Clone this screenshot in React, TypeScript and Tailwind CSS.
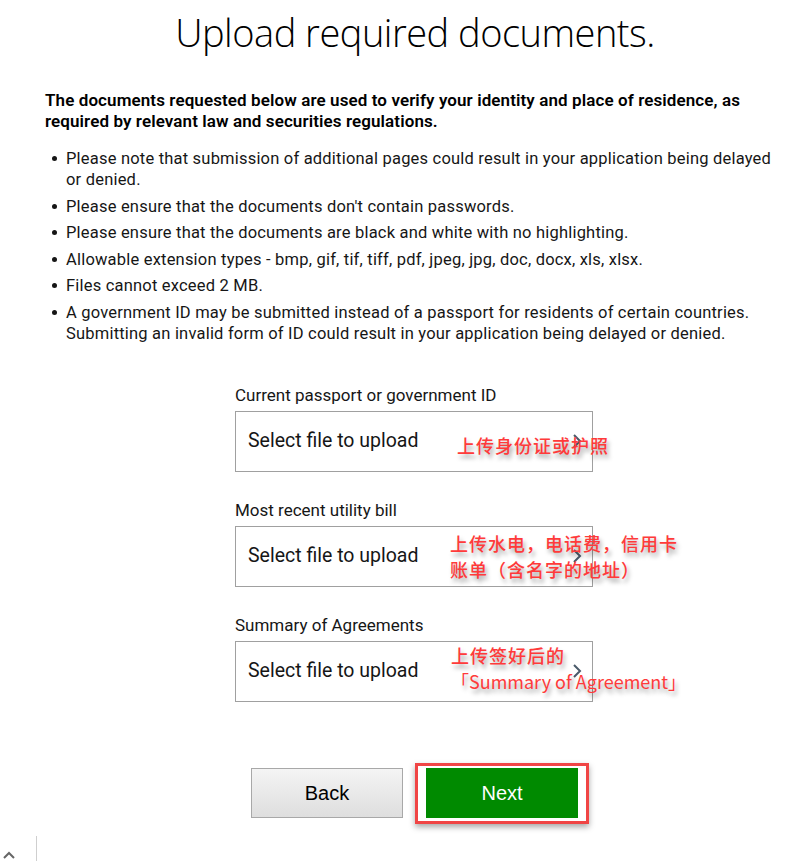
import React from 'react';

const BULLETS = [
  'Please note that submission of additional pages could result in your application being delayed or denied.',
  "Please ensure that the documents don't contain passwords.",
  'Please ensure that the documents are black and white with no highlighting.',
  'Allowable extension types - bmp, gif, tif, tiff, pdf, jpeg, jpg, doc, docx, xls, xlsx.',
  'Files cannot exceed 2 MB.',
  'A government ID may be submitted instead of a passport for residents of certain countries. Submitting an invalid form of ID could result in your application being delayed or denied.',
];

const NOTE =
  "absolute text-[#ff3a3a] text-[18px] leading-[26px] tracking-[1px] font-medium font-['Noto_Sans_CJK_SC',sans-serif] [text-shadow:2px_4px_4px_rgba(0,0,0,0.35)] whitespace-nowrap";

function UploadField({ label, note }: { label: string; note: React.ReactNode }) {
  return (
    <div className="relative">
      <div className="text-[17px] leading-[20px] text-[#161616] mb-[6px]">{label}</div>
      <div className="relative h-[61px] w-[358px] border border-[#a0a0a0] flex items-center px-[12px]">
        <span className="text-[19.5px] text-[#161616]">Select file to upload</span>
        <svg className="absolute right-[10px] top-1/2 -translate-y-1/2" width="10" height="16" viewBox="0 0 10 16">
          <path d="M2 2 L8 8 L2 14" fill="none" stroke="#4a5a6a" strokeWidth="2" />
        </svg>
      </div>
      {note}
    </div>
  );
}

export default function App() {
  return (
    <div className="relative w-[808px] h-[861px] bg-white overflow-hidden font-['Roboto',sans-serif] text-[#161616]">
      <h1 className="pt-[8px] pl-[22px] text-center text-[38px] leading-[48px] font-light tracking-[-0.5px] font-['Open_Sans',sans-serif] text-black">
        Upload required documents.
      </h1>

      <div className="px-[45px] mt-[34px]">
        <p className="w-[715px] text-[17px] leading-[21px] font-semibold tracking-[0.1px] text-black">
          The documents requested below are used to verify your identity and place of residence, as required by relevant law and securities regulations.
        </p>
        <ul className="mt-[16px] flex flex-col gap-[5.5px] w-[730px]">
          {BULLETS.map((b) => (
            <li key={b} className="flex text-[16.5px] leading-[21px] tracking-[0.2px]">
              <span className="w-[21px] shrink-0 pt-[8px] pl-[7px]">
                <span className="block w-[5px] h-[5px] rounded-full bg-[#161616]" />
              </span>
              <span>{b}</span>
            </li>
          ))}
        </ul>
      </div>

      <div className="ml-[235px] mt-[41px] flex flex-col gap-[28px]">
        <UploadField
          label="Current passport or government ID"
          note={<div className={NOTE} style={{ left: 222, top: 47 }}>上传身份证或护照</div>}
        />
        <UploadField
          label="Most recent utility bill"
          note={
            <div className={NOTE} style={{ left: 215, top: 30 }}>
              上传水电，电话费，信用卡
              <br />
              账单（含名字的地址）
            </div>
          }
        />
        <UploadField
          label="Summary of Agreements"
          note={
            <div className={NOTE} style={{ left: 216, top: 27 }}>
              上传签好后的
              <br />
              <span className="tracking-normal font-normal">「Summary of Agreement」</span>
            </div>
          }
        />
      </div>

      <div className="mt-[66px] ml-[251px] flex items-center gap-[23px]">
        <button className="w-[152px] h-[50px] border border-[#a8a8a8] bg-gradient-to-b from-[#f4f4f4] to-[#dedede] text-[20px] text-black font-['Liberation_Sans',sans-serif]">
          Back
        </button>
        <div className="relative">
          <button className="w-[152px] h-[50px] bg-[#008a00] text-white text-[20px] font-['Liberation_Sans',sans-serif]">
            Next
          </button>
          <div className="absolute -left-[11px] -right-[11px] -top-[5px] -bottom-[6px] border-[3px] border-[#f04545] shadow-[0_3px_6px_rgba(0,0,0,0.35)]" />
        </div>
      </div>

      <svg className="absolute left-[2px] top-[850px]" width="14" height="10" viewBox="0 0 14 10">
        <path d="M2 8 L7 3 L12 8" fill="none" stroke="#666" strokeWidth="2" />
      </svg>
      <div className="absolute left-[36px] top-[836px] w-px h-[25px] bg-[#cfcfcf]" />
    </div>
  );
}
